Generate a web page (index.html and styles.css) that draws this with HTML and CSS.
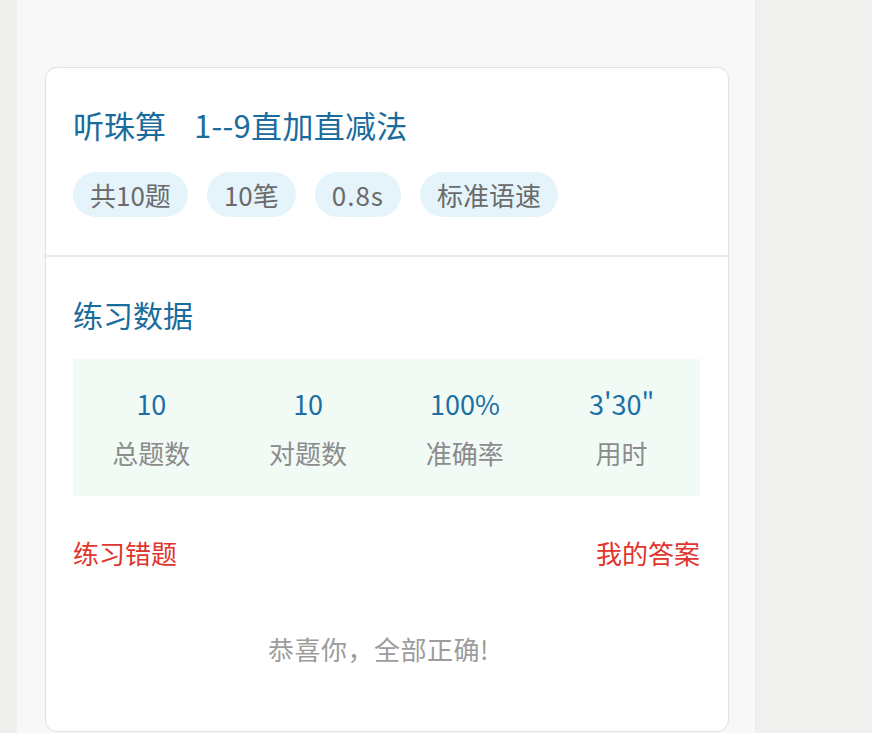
FILE: index.html
```html
<!DOCTYPE html>
<html lang="zh-CN">
<head>
<meta charset="utf-8">
<title>练习结果</title>
<link rel="stylesheet" href="styles.css">
</head>
<body>
<div class="page">
  <div class="gutter"></div>
  <main class="panel">
    <section class="card">
      <div class="card-head">
        <h1 class="title"><span>听珠算</span><span class="title-sub">1--9直加直减法</span></h1>
        <div class="tags">
          <span class="tag">共10题</span>
          <span class="tag">10笔</span>
          <span class="tag tag-latin">0.8s</span>
          <span class="tag">标准语速</span>
        </div>
      </div>
      <div class="card-body">
        <h2 class="section-title">练习数据</h2>
        <div class="stats">
          <div class="stat"><div class="stat-value">10</div><div class="stat-label">总题数</div></div>
          <div class="stat"><div class="stat-value">10</div><div class="stat-label">对题数</div></div>
          <div class="stat"><div class="stat-value">100%</div><div class="stat-label">准确率</div></div>
          <div class="stat"><div class="stat-value">3'30"</div><div class="stat-label">用时</div></div>
        </div>
        <div class="links">
          <span class="link">练习错题</span>
          <span class="link">我的答案</span>
        </div>
        <p class="congrats">恭喜你，全部正确!</p>
      </div>
    </section>
  </main>
  <div class="side"></div>
</div>
</body>
</html>
```

FILE: styles.css
```css
* { box-sizing: border-box; }
html, body { margin: 0; padding: 0; }
body {
  background: #efefee;
  font-family: "Noto Sans CJK SC", "Noto Sans", sans-serif;
  overflow: hidden;
}
.page {
  display: flex;
  height: 733px;
}
.gutter {
  width: 17px;
  flex: none;
  background: #efefee;
}
.panel {
  width: 739px;
  flex: none;
  background: #f8f8f8;
  border-right: 1px solid #ebebeb;
  padding: 67px 0 0 28px;
}
.side {
  flex: 1;
  background: #f0f0ef;
}
.card {
  width: 684px;
  background: #fff;
  border: 1px solid #e2e2e2;
  border-radius: 12px;
  box-shadow: 0 0 2px rgba(0,0,0,0.04);
}
.card-head {
  padding: 39px 28px 38px 27px;
  border-bottom: 2px solid #ebebeb;
}
.title {
  margin: 0;
  font-size: 31px;
  line-height: 36px;
  font-weight: 400;
  color: #1a6c9c;
  display: flex;
  gap: 28px;
}
.title-sub { letter-spacing: 0.3px; }
.tags {
  display: flex;
  gap: 19px;
  margin-top: 29px;
}
.tag {
  height: 45px;
  line-height: 45px;
  padding: 0 17px;
  border-radius: 23px;
  background: #e5f4fb;
  color: #6b6b6b;
  font-size: 26px;
}
.tag-latin { letter-spacing: 1px; }
.card-body {
  padding: 39px 28px 64px 27px;
}
.section-title {
  margin: 0;
  font-size: 30px;
  line-height: 36px;
  font-weight: 400;
  color: #1a6c9c;
}
.stats {
  margin-top: 27px;
  background: #f1faf5;
  display: grid;
  grid-template-columns: repeat(4, 1fr);
  padding: 27px 0 25px;
}
.stat {
  display: flex;
  flex-direction: column;
  align-items: center;
  gap: 13px;
}
.stat-value {
  font-size: 27px;
  line-height: 36px;
  color: #1a70a6;
}
.stat-label {
  font-size: 26px;
  line-height: 36px;
  color: #8c8c8c;
}
.links {
  margin-top: 39px;
  display: flex;
  justify-content: space-between;
}
.link {
  font-size: 26px;
  line-height: 36px;
  color: #e0352d;
}
.congrats {
  margin: 60px 0 0;
  padding-right: 16px;
  text-align: center;
  font-size: 26px;
  line-height: 36px;
  color: #9c9c9c;
  letter-spacing: 0.5px;
}
```
